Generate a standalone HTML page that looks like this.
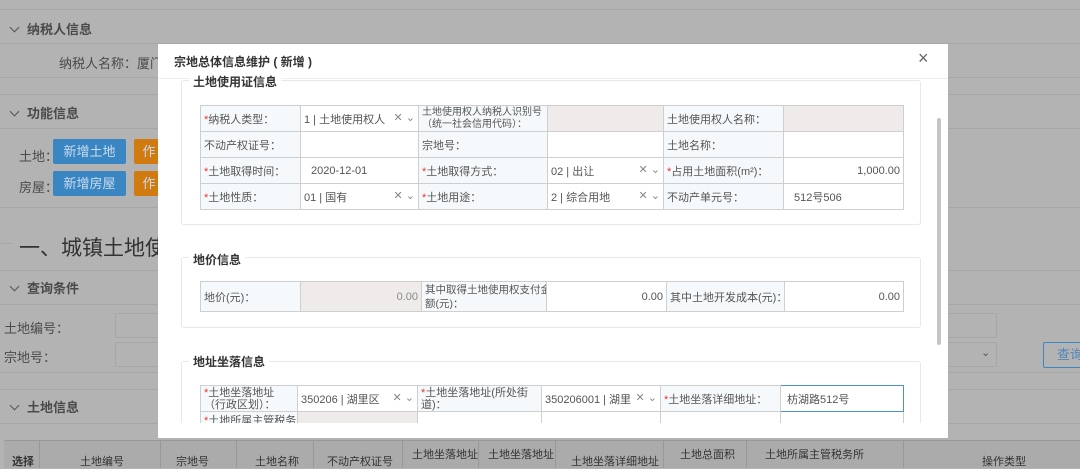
<!DOCTYPE html>
<html><head><meta charset="utf-8"><style>
*{box-sizing:border-box;margin:0;padding:0}
body{width:1080px;height:468px;overflow:hidden;background:#b3b3b3;font-family:"Liberation Sans","Noto Sans CJK SC",sans-serif;font-size:12px;color:#3a3a3a;position:relative}
.a{position:absolute}
.hl{position:absolute;left:0;right:0;height:1px;background:#a7a7a7}
.btn{position:absolute;height:25px;color:#c9dcec;text-align:center;line-height:25px;font-size:13px;border-radius:2px}
.modal{position:absolute;left:158px;top:44px;width:790px;height:394px;background:#fff;overflow:hidden}
.fs{position:absolute;border:1px solid #e8e8e8;border-radius:3px}
.lg{position:absolute;background:#fff;font-weight:bold;font-size:12px;color:#333;padding:0 4px}
table{position:absolute;border-collapse:collapse;table-layout:fixed}
td{border:1px solid #cfcfcf;font-size:11px;color:#555;padding:0 3px;overflow:hidden;white-space:nowrap}
td.l{background:#f6f9fb;color:#555}
td.d{background:#efebeb}
.r{color:#e33}
.x{float:right;color:#888;font-size:11px}
.num{text-align:right}
.cv{display:inline-block;width:7px;height:7px;border-right:1.3px solid #555;border-bottom:1.3px solid #555;transform:rotate(45deg);margin:0 9px 3px 3px}
.bg{color:#4a4a4a}
</style></head><body>
<div class="hl" style="top:9px"></div>
<div class="a bg" style="left:8px;top:19px"><span class="cv"></span><b style="font-size:13px">纳税人信息</b></div>
<div class="hl" style="top:43px"></div>
<div class="a bg" style="left:59px;top:53px;font-size:13px">纳税人名称：厦门莘</div>
<div class="hl" style="top:77px"></div>
<div class="hl" style="top:94px"></div>
<div class="a bg" style="left:8px;top:103px"><span class="cv"></span><b style="font-size:13px">功能信息</b></div>
<div class="hl" style="top:128px"></div>
<div class="a bg" style="left:19px;top:146px;font-size:13px">土地：</div>
<div class="btn" style="left:53px;top:139px;width:73px;background:#3a86c3">新增土地</div>
<div class="btn" style="left:134px;top:139px;width:30px;background:#d07a0f">作</div>
<div class="a bg" style="left:19px;top:177px;font-size:13px">房屋：</div>
<div class="btn" style="left:53px;top:171px;width:73px;background:#3a86c3">新增房屋</div>
<div class="btn" style="left:134px;top:171px;width:30px;background:#d07a0f">作</div>
<div class="hl" style="top:207px"></div>
<div class="a" style="left:0;top:243px;width:12px;height:1px;background:#a5a5a5"></div>
<div class="a" style="left:19px;top:232px;font-size:21px;color:#333">一、城镇土地使用税</div>
<div class="hl" style="top:270px"></div>
<div class="a bg" style="left:8px;top:278px"><span class="cv"></span><b style="font-size:13px">查询条件</b></div>
<div class="hl" style="top:304px"></div>
<div class="a bg" style="left:4px;top:318px;font-size:13px">土地编号：</div>
<div class="a" style="left:115px;top:313px;width:882px;height:25px;border:1px solid #a7a7a7;border-radius:2px"></div>
<div class="a bg" style="left:4px;top:347px;font-size:13px">宗地号：</div>
<div class="a" style="left:115px;top:342px;width:882px;height:25px;border:1px solid #a7a7a7;border-radius:2px"></div>
<div class="a" style="left:981px;top:346px;font-size:11px;color:#555">⌄</div>
<div class="a" style="left:1043px;top:342px;width:50px;height:26px;border:1px solid #3a86c3;border-radius:2px;color:#4f86b8;font-size:13px;line-height:24px;padding-left:13px">查询</div>
<div class="hl" style="top:372px"></div>
<div class="hl" style="top:389px"></div>
<div class="a bg" style="left:8px;top:397px"><span class="cv"></span><b style="font-size:13px">土地信息</b></div>
<div class="hl" style="top:423px"></div>
<div class="a" style="left:4px;top:440px;width:1076px;height:28px;background:#ababab;border-top:1px solid #999"></div>
<div class="a" style="left:12px;top:453px;font-size:11px;color:#333;font-weight:bold">选择</div>
<div class="a" style="left:80px;top:453px;font-size:11px;color:#333">土地编号</div>
<div class="a" style="left:176px;top:453px;font-size:11px;color:#333">宗地号</div>
<div class="a" style="left:255px;top:453px;font-size:11px;color:#333">土地名称</div>
<div class="a" style="left:327px;top:453px;font-size:11px;color:#333">不动产权证号</div>
<div class="a" style="left:412px;top:446px;font-size:11px;color:#333">土地坐落地址</div>
<div class="a" style="left:488px;top:446px;font-size:11px;color:#333">土地坐落地址</div>
<div class="a" style="left:571px;top:453px;font-size:11px;color:#333">土地坐落详细地址</div>
<div class="a" style="left:680px;top:446px;font-size:11px;color:#333">土地总面积</div>
<div class="a" style="left:765px;top:446px;font-size:11px;color:#333">土地所属主管税务所</div>
<div class="a" style="left:982px;top:453px;font-size:11px;color:#333">操作类型</div>
<div class="a" style="left:39px;top:440px;width:1px;height:28px;background:#999"></div>
<div class="a" style="left:160px;top:440px;width:1px;height:28px;background:#999"></div>
<div class="a" style="left:236px;top:440px;width:1px;height:28px;background:#999"></div>
<div class="a" style="left:313px;top:440px;width:1px;height:28px;background:#999"></div>
<div class="a" style="left:402px;top:440px;width:1px;height:28px;background:#999"></div>
<div class="a" style="left:478px;top:440px;width:1px;height:28px;background:#999"></div>
<div class="a" style="left:555px;top:440px;width:1px;height:28px;background:#999"></div>
<div class="a" style="left:663px;top:440px;width:1px;height:28px;background:#999"></div>
<div class="a" style="left:746px;top:440px;width:1px;height:28px;background:#999"></div>
<div class="a" style="left:903px;top:440px;width:1px;height:28px;background:#999"></div>

<div class="modal">
<div class="a" style="left:16px;top:9px;font-size:12px;color:#333;font-weight:bold">宗地总体信息维护 ( 新增 )</div>
<div class="a" style="left:760px;top:4px;font-size:18px;color:#666">×</div>
<div class="a" style="left:0;top:34px;width:790px;height:1px;background:#eee"></div>
<div class="a" style="left:779px;top:74px;width:4px;height:227px;background:#c5c5c5;border-radius:2px"></div>

<div class="fs" style="left:23px;top:36px;width:740px;height:145px"></div>
<div class="lg" style="left:31px;top:29px">土地使用证信息</div>
<table style="left:42px;top:61px;width:703px">
<colgroup><col style="width:100px"><col style="width:118px"><col style="width:129px"><col style="width:116px"><col style="width:120px"><col style="width:120px"></colgroup>
<tr style="height:26px"><td class="l"><span class="r">*</span>纳税人类型：</td><td>1 | 土地使用权人<span class="x">✕ ⌄</span></td><td class="l" style="line-height:12px;font-size:10px">土地使用权人纳税人识别号<br>（统一社会信用代码）：</td><td class="d"></td><td class="l">土地使用权人名称：</td><td class="d"></td></tr>
<tr style="height:26px"><td class="l">不动产权证号：</td><td></td><td class="l">宗地号：</td><td></td><td class="l">土地名称：</td><td></td></tr>
<tr style="height:26px"><td class="l"><span class="r">*</span>土地取得时间：</td><td style="padding-left:10px">2020-12-01</td><td class="l"><span class="r">*</span>土地取得方式：</td><td>02 | 出让<span class="x">✕ ⌄</span></td><td class="l"><span class="r">*</span>占用土地面积(m²)：</td><td class="num">1,000.00</td></tr>
<tr style="height:26px"><td class="l"><span class="r">*</span>土地性质：</td><td>01 | 国有<span class="x">✕ ⌄</span></td><td class="l"><span class="r">*</span>土地用途：</td><td>2 | 综合用地<span class="x">✕ ⌄</span></td><td class="l">不动产单元号：</td><td style="padding-left:10px">512号506</td></tr>
</table>

<div class="fs" style="left:23px;top:213px;width:740px;height:71px"></div>
<div class="lg" style="left:31px;top:207px">地价信息</div>
<table style="left:42px;top:237px;width:703px">
<colgroup><col style="width:100px"><col style="width:121px"><col style="width:125px"><col style="width:120px"><col style="width:118px"><col style="width:119px"></colgroup>
<tr style="height:30px"><td class="l">地价(元)：</td><td class="d num" style="color:#888">0.00</td><td class="l" style="line-height:14px;font-size:10.5px">其中取得土地使用权支付金<br>额(元)：</td><td class="num">0.00</td><td class="l">其中土地开发成本(元)：</td><td class="num">0.00</td></tr>
</table>

<div class="fs" style="left:23px;top:317px;width:740px;height:100px"></div>
<div class="lg" style="left:31px;top:309px">地址坐落信息</div>
<table style="left:42px;top:341px;width:703px">
<colgroup><col style="width:97px"><col style="width:120px"><col style="width:124px"><col style="width:119px"><col style="width:120px"><col style="width:123px"></colgroup>
<tr style="height:26px"><td class="l" style="line-height:12px"><span class="r">*</span>土地坐落地址<br>（行政区划）：</td><td>350206 | 湖里区<span class="x">✕ ⌄</span></td><td class="l" style="line-height:12px"><span class="r">*</span>土地坐落地址(所处街<br>道)：</td><td>350206001 | 湖里<span class="x">✕ ⌄</span></td><td class="l"><span class="r">*</span>土地坐落详细地址：</td><td style="border:1px solid #4a90d9;padding-left:6px">枋湖路512号</td></tr>
<tr style="height:26px"><td class="l" style="vertical-align:top"><span class="r">*</span>土地所属主管税务所</td><td class="d" style="vertical-align:bottom">国家税务总局厦门</td><td></td><td></td><td></td><td></td></tr>
</table>
<div class="a" style="left:0;top:379px;width:790px;height:15px;background:#fff"></div>
</div>
</body></html>
